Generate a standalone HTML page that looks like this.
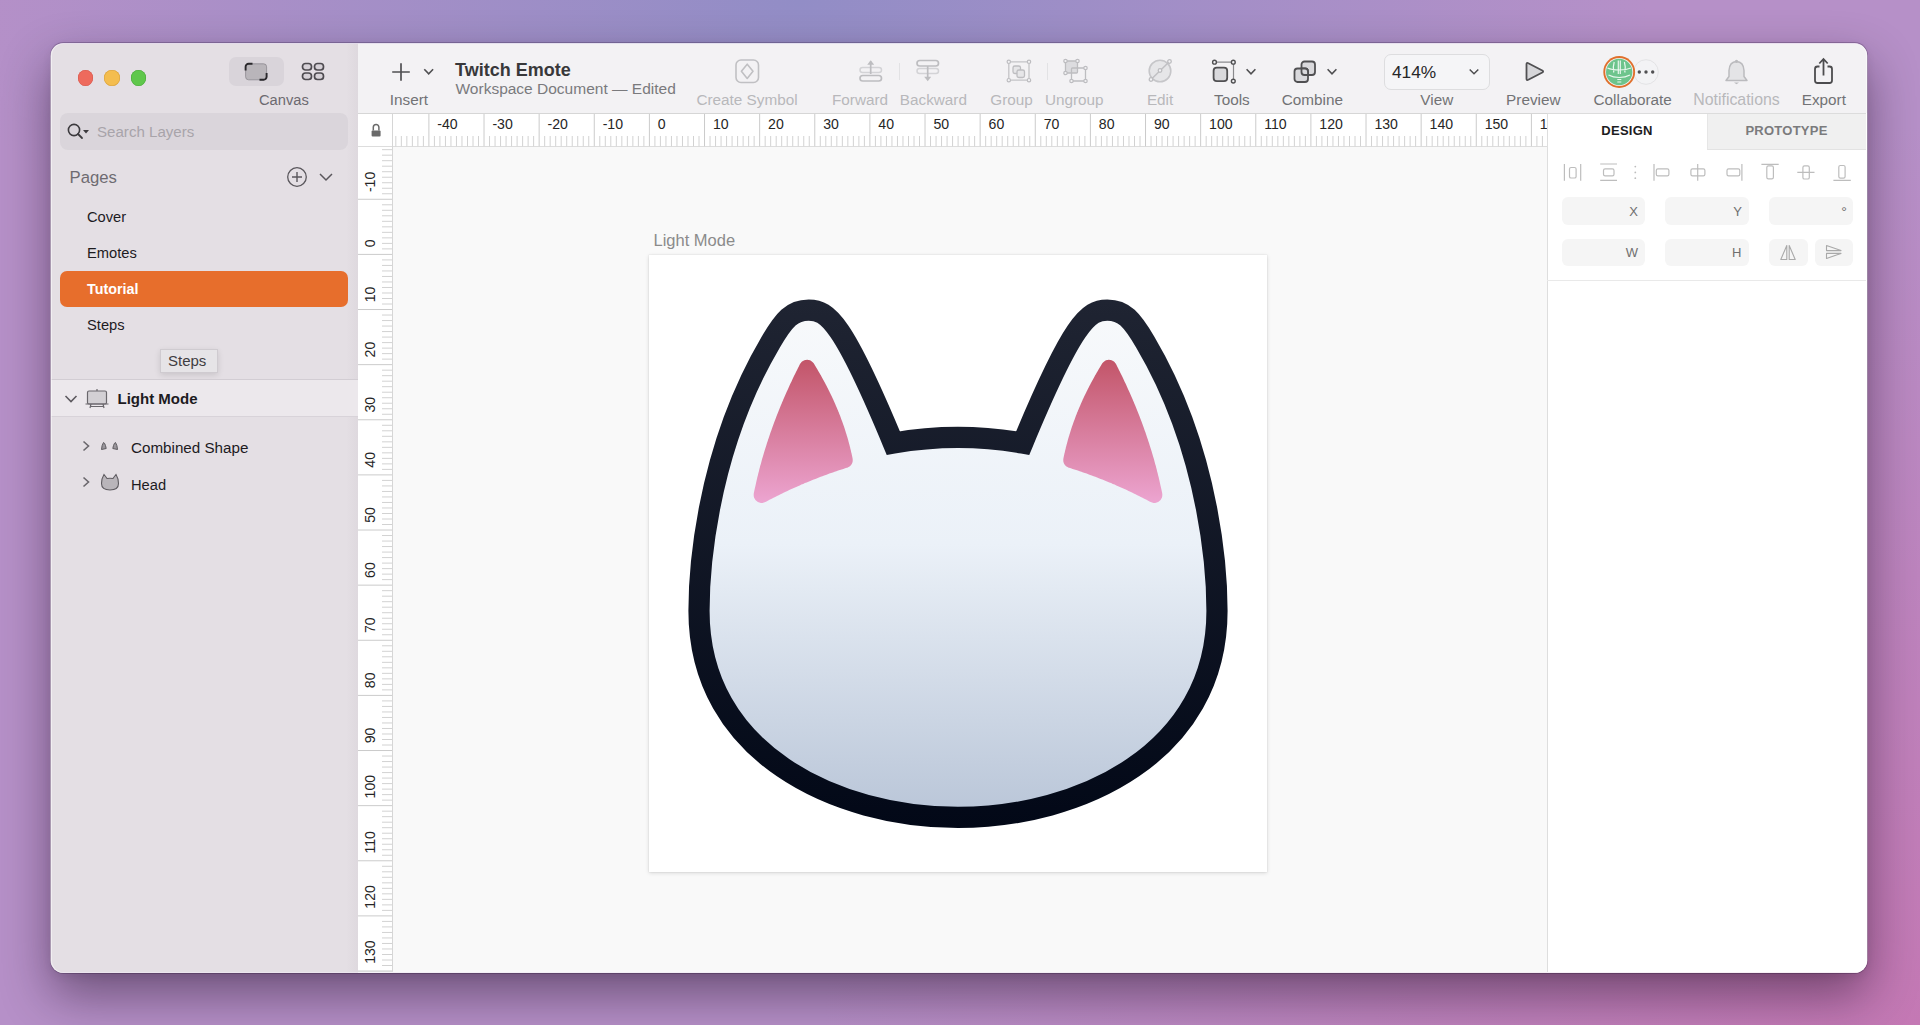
<!DOCTYPE html>
<html><head><meta charset="utf-8">
<style>
*{margin:0;padding:0;box-sizing:border-box}
html,body{width:1920px;height:1025px;overflow:hidden}
body{position:relative;font-family:"Liberation Sans",sans-serif;
background:radial-gradient(ellipse 850px 420px at 800px 0px,rgba(146,141,198,1),rgba(146,141,198,0)),radial-gradient(ellipse 1100px 900px at 1920px 1025px,rgba(196,120,180,1),rgba(196,120,180,0)),#b690c8;}
.a{position:absolute}
.t{position:absolute;white-space:nowrap;line-height:20px;height:20px}
#shadow{position:absolute;left:50.5px;top:43.4px;width:1816.8px;height:929.4px;border-radius:12.5px;
box-shadow:0 22px 50px rgba(20,5,25,.45),0 3px 10px rgba(20,5,25,.08),0 0 0 1px rgba(60,40,80,.3)}
#hl{position:absolute;left:50.5px;top:43.4px;width:1816.8px;height:929.4px;border-radius:12.5px;box-shadow:inset 0 0 0 1px rgba(255,255,255,.5);pointer-events:none}
#win{position:absolute;left:0;top:0;width:1920px;height:1025px;clip-path:inset(43.4px 52.7px 52.2px 50.5px round 12.5px)}
#side{position:absolute;left:50px;top:43px;width:308px;height:931px;background:#e4dfe4}
#tool{position:absolute;left:358px;top:43px;width:1510px;height:70px;background:#f3f2f4}
#hrul{position:absolute;left:358px;top:113px;width:1189px;height:34px;background:#fff;overflow:hidden}
#vrul{position:absolute;left:358px;top:147px;width:35px;height:827px;background:#fff;overflow:hidden}
#canvas{position:absolute;left:393px;top:147px;width:1154px;height:827px;background:#f9f9f9}
#insp{position:absolute;left:1547px;top:113px;width:321px;height:861px;background:#fff}
.dot{position:absolute;width:15.5px;height:15.5px;border-radius:50%;top:70.25px}
.tl{top:90px;width:120px;text-align:center;font-size:15.3px;color:#727275}
.dis{color:#b8b8bb}
.fld{position:absolute;height:27.5px;border-radius:6px;background:#f5f5f5}
.fld span{position:absolute;top:0.5px;line-height:27.5px;font-size:13px;font-weight:400;color:#6f6f6f}
.pg{font-size:14.7px;color:#1d1b1f}
</style></head><body>
<div id="shadow"></div>
<div id="win">
  <div id="side"></div>
  <div id="tool"></div>
  <div id="hrul"></div>
  <div id="vrul"></div>
  <div id="canvas"></div>
  <div id="insp"></div>

  <!-- SIDEBAR -->
  <div class="a" style="left:346px;top:43px;width:12px;height:931px;background:linear-gradient(90deg,rgba(60,40,60,0),rgba(60,40,60,.035))"></div>
  <div class="dot" style="left:77.5px;background:#ee6a5d;box-shadow:inset 0 0 0 .6px #d65a4f"></div>
  <div class="dot" style="left:104.2px;background:#f4bd4f;box-shadow:inset 0 0 0 .6px #d9a23f"></div>
  <div class="dot" style="left:130.8px;background:#5fc74b;box-shadow:inset 0 0 0 .6px #4ba83c"></div>

  <div class="a" style="left:228.5px;top:56.8px;width:55px;height:29px;border-radius:7px;background:#d9d4da"></div>
  <svg class="a" style="left:244px;top:62px" width="24" height="19" viewBox="0 0 24 19">
    <rect x="1.6" y="1.8" width="21" height="16" rx="3" fill="#b9b5ba" stroke="#8d898f" stroke-width=".8"/>
    <path d="M1.6 8.5 V4.8 a3 3 0 0 1 3 -3 H8.5" fill="none" stroke="#2a282c" stroke-width="1.9"/>
    <path d="M22.6 11 V14.8 a3 3 0 0 1 -3 3 H15.5" fill="none" stroke="#2a282c" stroke-width="1.9"/>
  </svg>
  <svg class="a" style="left:301px;top:62px" width="24" height="19" viewBox="0 0 24 19">
    <rect x="1.5" y="1.5" width="9" height="6.5" rx="3" fill="#d6d1d7" stroke="#4e4b50" stroke-width="1.7"/>
    <rect x="13.5" y="1.5" width="9" height="6.5" rx="3" fill="#d6d1d7" stroke="#4e4b50" stroke-width="1.7"/>
    <rect x="1.5" y="11" width="9" height="6.5" rx="3" fill="#d6d1d7" stroke="#4e4b50" stroke-width="1.7"/>
    <rect x="13.5" y="11" width="9" height="6.5" rx="3" fill="#d6d1d7" stroke="#4e4b50" stroke-width="1.7"/>
  </svg>
  <div class="t" style="left:259px;top:90px;font-size:14.7px;color:#6d6a70">Canvas</div>

  <div class="a" style="left:60px;top:113px;width:288px;height:37px;border-radius:8px;background:#dad5db"></div>
  <svg class="a" style="left:66px;top:122px" width="24" height="20" viewBox="0 0 24 20">
    <circle cx="8" cy="8" r="5.6" fill="none" stroke="#3c3a3e" stroke-width="1.6"/>
    <path d="M12 12 L16 16" stroke="#3c3a3e" stroke-width="1.8" stroke-linecap="round"/>
    <path d="M17 8 L23 8 L20 11.5 Z" fill="#3c3a3e"/>
  </svg>
  <div class="t" style="left:97px;top:122px;font-size:15.1px;color:#a8a4aa">Search Layers</div>

  <div class="t" style="left:69.5px;top:167.5px;font-size:16.7px;color:#6e6b71">Pages</div>
  <svg class="a" style="left:285px;top:165px" width="24" height="24" viewBox="0 0 24 24">
    <circle cx="12" cy="12" r="9.3" fill="none" stroke="#5a575c" stroke-width="1.3"/>
    <path d="M12 7 V17 M7 12 H17" stroke="#5a575c" stroke-width="1.4"/>
  </svg>
  <svg class="a" style="left:318px;top:170px" width="16" height="14" viewBox="0 0 16 14">
    <path d="M2 4 L8 10 L14 4" fill="none" stroke="#5a575c" stroke-width="1.5"/>
  </svg>

  <div class="t pg" style="left:87px;top:207px">Cover</div>
  <div class="t pg" style="left:87px;top:243px">Emotes</div>
  <div class="a" style="left:60px;top:270.5px;width:288px;height:36px;border-radius:7px;background:#e76e2c"></div>
  <div class="t pg" style="left:87px;top:279px;color:#fff;font-weight:700;font-size:14.3px">Tutorial</div>
  <div class="t pg" style="left:87px;top:315px">Steps</div>

  <div class="a" style="left:159.5px;top:348.5px;width:58px;height:24.5px;background:#e6e4e7;border:1px solid #cfcbd0;box-shadow:0 2px 6px rgba(0,0,0,.12)"></div>
  <div class="t" style="left:168px;top:351px;font-size:15px;color:#3f3d41">Steps</div>

  <div class="a" style="left:51px;top:379px;width:307px;height:1px;background:#d2cdd3"></div>
  <div class="a" style="left:51px;top:380px;width:307px;height:36px;background:#ece8ec"></div>
  <div class="a" style="left:51px;top:416px;width:307px;height:1px;background:#d8d3d9"></div>
  <svg class="a" style="left:64px;top:393px" width="14" height="12" viewBox="0 0 14 12">
    <path d="M1.5 3 L7 8.5 L12.5 3" fill="none" stroke="#5e5b60" stroke-width="1.6"/>
  </svg>
  <svg class="a" style="left:85px;top:388px" width="24" height="21" viewBox="0 0 24 21">
    <path d="M12 1 V3" stroke="#6a676c" stroke-width="1.2"/>
    <rect x="2.5" y="3" width="19" height="13" rx="1.5" fill="#d3d0d4" stroke="#6a676c" stroke-width="1.2"/>
    <path d="M0.5 16 H23.5 M6 16 L5 20 M18 16 L19 20 M5.5 18.5 H18.5" fill="none" stroke="#6a676c" stroke-width="1.2"/>
  </svg>
  <div class="t" style="left:117.5px;top:389px;font-size:15px;font-weight:700;color:#1d1b1f">Light Mode</div>

  <svg class="a" style="left:80px;top:440px" width="12" height="12" viewBox="0 0 12 12">
    <path d="M3.5 1.5 L8.5 6 L3.5 10.5" fill="none" stroke="#6a676c" stroke-width="1.6"/>
  </svg>
  <svg class="a" style="left:99px;top:441px" width="22" height="11" viewBox="0 0 22 11">
    <path d="M4.5 1.5 Q5.5 1.5 6.5 4.5 L7.2 7.5 Q5 8 2.5 8.5 Q2.8 4 4.5 1.5 Z" fill="#9a969c" stroke="#5e5b60" stroke-width="1"/>
    <path d="M16.5 1.5 Q15.5 1.5 14.5 4.5 L13.8 7.5 Q16 8 18.5 8.5 Q18.2 4 16.5 1.5 Z" fill="#9a969c" stroke="#5e5b60" stroke-width="1"/>
  </svg>
  <div class="t pg" style="left:131px;top:438px;font-size:15.2px">Combined Shape</div>

  <svg class="a" style="left:80px;top:476px" width="12" height="12" viewBox="0 0 12 12">
    <path d="M3.5 1.5 L8.5 6 L3.5 10.5" fill="none" stroke="#6a676c" stroke-width="1.6"/>
  </svg>
  <svg class="a" style="left:100px;top:472px" width="20" height="20" viewBox="0 0 20 20">
    <path d="M4 2.5 Q6 5 7 6.5 Q10 6 13 6.5 Q14 5 16 2.5 Q18.5 6.5 18.5 11.5 Q18.5 18 10 18 Q1.5 18 1.5 11.5 Q1.5 6.5 4 2.5 Z" fill="#b9b5ba" stroke="#5e5b60" stroke-width="1.1"/>
  </svg>
  <div class="t pg" style="left:131px;top:474.5px">Head</div>

  <!-- TOOLBAR -->
  <svg class="a" style="left:390px;top:61px" width="22" height="22" viewBox="0 0 22 22">
    <path d="M11 2.3V19.7M2.2 11H19.8" stroke="#505052" stroke-width="1.7" fill="none"/>
  </svg>
  <svg class="a" style="left:422px;top:66px" width="14" height="12" viewBox="0 0 14 12">
    <path d="M2.3 3.2L6.7 7.8L11.1 3.2" stroke="#505052" stroke-width="1.6" fill="none"/>
  </svg>
  <div class="t tl" style="left:349px">Insert</div>
  <div class="t" style="left:455px;top:59.5px;font-size:18px;font-weight:700;color:#38383a">Twitch Emote</div>
  <div class="t" style="left:455.5px;top:79px;font-size:15.5px;color:#7a7a7d">Workspace Document — Edited</div>

  <svg class="a" style="left:733px;top:57px" width="28" height="28" viewBox="0 0 28 28">
    <rect x="3" y="3" width="22.5" height="22.5" rx="5" fill="none" stroke="#c0c0c3" stroke-width="1.6"/>
    <path d="M14.2 7.2L20 14.2L14.2 21.4L8.4 14.2Z" fill="none" stroke="#c0c0c3" stroke-width="1.6" stroke-linejoin="round"/>
  </svg>
  <div class="t tl dis" style="left:687px">Create Symbol</div>

  <svg class="a" style="left:856px;top:57px" width="30" height="28" viewBox="0 0 30 28">
    <rect x="4" y="10.5" width="21.5" height="5" rx="2.5" fill="none" stroke="#d3d3d6" stroke-width="1.5"/>
    <rect x="4" y="18.5" width="21.5" height="5.5" rx="2.75" fill="none" stroke="#bdbdc0" stroke-width="1.7"/>
    <path d="M14.7 4.5V17" stroke="#bdbdc0" stroke-width="1.7"/>
    <path d="M11.2 7.8L14.7 3.2L18.2 7.8Z" fill="#bdbdc0"/>
  </svg>
  <div class="a" style="left:898.5px;top:63px;width:1px;height:17px;background:#e2e2e4"></div>
  <svg class="a" style="left:913px;top:57px" width="30" height="28" viewBox="0 0 30 28">
    <rect x="4" y="3.5" width="21.5" height="5.5" rx="2.75" fill="none" stroke="#bdbdc0" stroke-width="1.7"/>
    <rect x="4" y="11.5" width="21.5" height="5" rx="2.5" fill="none" stroke="#d3d3d6" stroke-width="1.5"/>
    <path d="M14.7 9V21" stroke="#bdbdc0" stroke-width="1.7"/>
    <path d="M11.2 19.8L14.7 24.3L18.2 19.8Z" fill="#bdbdc0"/>
  </svg>
  <div class="t tl dis" style="left:800px">Forward</div>
  <div class="t tl dis" style="left:873.4px">Backward</div>

  <svg class="a" style="left:1004px;top:57px" width="30" height="28" viewBox="0 0 30 28">
    <path d="M4.8 6.5V21.5M25 6.5V21.5M6.5 4.8H23.3M6.5 23.2H23.3" stroke="#c3c3c6" stroke-width="1.3"/>
    <circle cx="4.8" cy="4.8" r="1.7" fill="#f3f3f5" stroke="#bdbdc0" stroke-width="1.2"/>
    <circle cx="25" cy="4.8" r="1.7" fill="#f3f3f5" stroke="#bdbdc0" stroke-width="1.2"/>
    <circle cx="4.8" cy="23.2" r="1.7" fill="#f3f3f5" stroke="#bdbdc0" stroke-width="1.2"/>
    <circle cx="25" cy="23.2" r="1.7" fill="#f3f3f5" stroke="#bdbdc0" stroke-width="1.2"/>
    <rect x="9" y="9" width="7.5" height="7.5" rx="1.8" fill="#e6e6e8" stroke="#bdbdc0" stroke-width="1.3"/>
    <rect x="13" y="13" width="7.5" height="7.5" rx="1.8" fill="#e6e6e8" stroke="#bdbdc0" stroke-width="1.3"/>
  </svg>
  <div class="a" style="left:1047px;top:63px;width:1px;height:17px;background:#e2e2e4"></div>
  <svg class="a" style="left:1062px;top:57px" width="30" height="28" viewBox="0 0 30 28">
    <rect x="3.5" y="4" width="12" height="12" rx="1" fill="#dcdcdf" stroke="#bdbdc0" stroke-width="1.3"/>
    <rect x="9.5" y="11" width="14" height="13" rx="1" fill="none" stroke="#bdbdc0" stroke-width="1.3"/>
    <circle cx="3.5" cy="4" r="1.7" fill="#f3f3f5" stroke="#bdbdc0" stroke-width="1.2"/>
    <circle cx="15.5" cy="4" r="1.7" fill="#f3f3f5" stroke="#bdbdc0" stroke-width="1.2"/>
    <circle cx="3.5" cy="16" r="1.7" fill="#f3f3f5" stroke="#bdbdc0" stroke-width="1.2"/>
    <circle cx="23.5" cy="11" r="1.7" fill="#f3f3f5" stroke="#bdbdc0" stroke-width="1.2"/>
    <circle cx="9.5" cy="24" r="1.7" fill="#f3f3f5" stroke="#bdbdc0" stroke-width="1.2"/>
    <circle cx="23.5" cy="24" r="1.7" fill="#f3f3f5" stroke="#bdbdc0" stroke-width="1.2"/>
  </svg>
  <div class="t tl dis" style="left:951.6px">Group</div>
  <div class="t tl dis" style="left:1014.3px">Ungroup</div>

  <svg class="a" style="left:1146px;top:57px" width="28" height="28" viewBox="0 0 28 28">
    <circle cx="14" cy="14" r="10.8" fill="#e6e6e8" stroke="#c6c6c9" stroke-width="1.6"/>
    <path d="M5 22.5L23.5 4.5" stroke="#c0c0c3" stroke-width="1.5"/>
    <circle cx="14" cy="13.5" r="1.8" fill="#f3f3f5" stroke="#bdbdc0" stroke-width="1.3"/>
    <circle cx="5" cy="22.5" r="1.8" fill="#f3f3f5" stroke="#bdbdc0" stroke-width="1.3"/>
    <circle cx="23.5" cy="4.5" r="1.8" fill="#f3f3f5" stroke="#bdbdc0" stroke-width="1.3"/>
  </svg>
  <div class="t tl dis" style="left:1100.1px">Edit</div>

  <svg class="a" style="left:1209px;top:58px" width="30" height="28" viewBox="0 0 30 28">
    <path d="M6.5 4.2H24.5V21.2" fill="none" stroke="#8a8a8d" stroke-width="1.2"/>
    <rect x="4.6" y="9.6" width="13.6" height="13.6" rx="3.2" fill="#d9d9dc" stroke="#505052" stroke-width="1.8"/>
    <circle cx="5.5" cy="4.2" r="1.9" fill="#f3f3f5" stroke="#505052" stroke-width="1.4"/>
    <circle cx="24.3" cy="4.2" r="1.9" fill="#f3f3f5" stroke="#505052" stroke-width="1.4"/>
    <circle cx="24.3" cy="23.1" r="1.9" fill="#f3f3f5" stroke="#505052" stroke-width="1.4"/>
  </svg>
  <svg class="a" style="left:1244px;top:66px" width="14" height="12" viewBox="0 0 14 12">
    <path d="M2.6 3.2L7 7.8L11.4 3.2" stroke="#505052" stroke-width="1.6" fill="none"/>
  </svg>
  <div class="t tl" style="left:1171.9px">Tools</div>

  <svg class="a" style="left:1291px;top:58px" width="28" height="28" viewBox="0 0 28 28">
    <rect x="10.5" y="3.5" width="13.5" height="13.5" rx="3" fill="#d9d9dc" stroke="#505052" stroke-width="1.8"/>
    <rect x="3.5" y="10.5" width="13.5" height="13.5" rx="3" fill="#d9d9dc" stroke="#505052" stroke-width="1.8"/>
    <path d="M10.5 13.5V10.5H14A3 3 0 0 1 17 13.5V17H13.5A3 3 0 0 1 10.5 14Z" fill="#d9d9dc" stroke="#505052" stroke-width="1.8"/>
  </svg>
  <svg class="a" style="left:1325px;top:66px" width="14" height="12" viewBox="0 0 14 12">
    <path d="M2.6 3.2L7 7.8L11.4 3.2" stroke="#505052" stroke-width="1.6" fill="none"/>
  </svg>
  <div class="t tl" style="left:1252.3px">Combine</div>

  <div class="a" style="left:1383.5px;top:53.5px;width:106px;height:36px;border-radius:7px;border:1px solid #dddddf;background:#f5f5f7"></div>
  <div class="t" style="left:1392px;top:62px;font-size:17.3px;color:#262628">414%</div>
  <svg class="a" style="left:1467px;top:66px" width="14" height="12" viewBox="0 0 14 12">
    <path d="M2.7 3.5L7 7.8L11.3 3.5" stroke="#505052" stroke-width="1.5" fill="none"/>
  </svg>
  <div class="t tl" style="left:1376.8px">View</div>

  <svg class="a" style="left:1520px;top:58px" width="28" height="28" viewBox="0 0 28 28">
    <path d="M6.5 6.3Q6.5 4.3 8.3 5.2L22.3 12.5Q24 13.5 22.3 14.5L8.3 21.8Q6.5 22.7 6.5 20.7Z" fill="#d6d6d9" stroke="#505052" stroke-width="1.8" stroke-linejoin="round"/>
  </svg>
  <div class="t tl" style="left:1473.3px">Preview</div>

  <svg class="a" style="left:1601px;top:54px" width="64" height="36" viewBox="0 0 64 36">
    <circle cx="45" cy="18" r="12.3" fill="#f3f3f5" stroke="#e3e3e5" stroke-width="1"/>
    <circle cx="38.3" cy="18" r="1.7" fill="#505052"/>
    <circle cx="45" cy="18" r="1.7" fill="#505052"/>
    <circle cx="51.7" cy="18" r="1.7" fill="#505052"/>
    <circle cx="18.2" cy="18" r="15.9" fill="#e0702c"/>
    <circle cx="18.2" cy="18" r="14" fill="#f3f3f5"/>
    <circle cx="18.2" cy="18" r="13.2" fill="#6dc48c"/>
    <path d="M17.3 6.5V20M19.3 6.5V20M13.2 8Q11.6 13 12.8 18.5M23.4 8Q25 13 23.8 18.5M6.5 14Q11 16 18.3 16Q25.5 16 30 14M7.5 21Q12 23.5 18.3 23.5Q24.5 23.5 29 21M16.3 25.5H20.3M16.3 28H20.3" stroke="#e9f7ee" stroke-width="1.2" fill="none"/>
  </svg>
  <div class="t tl" style="left:1572.7px">Collaborate</div>

  <svg class="a" style="left:1724px;top:57px" width="26" height="30" viewBox="0 0 26 30">
    <path d="M12.5 4.6Q19.5 5 20 13.5V19.5L23 23.5H2L5 19.5V13.5Q5.5 5 12.5 4.6Z" fill="#e4e4e6" stroke="#bbbbbe" stroke-width="1.5" stroke-linejoin="round"/>
    <circle cx="12.5" cy="4.3" r="1.6" fill="#bbbbbe"/>
    <path d="M10 25.5H15L12.5 27.3Z" fill="#bbbbbe"/>
  </svg>
  <div class="t tl dis" style="left:1676.5px;font-size:15.9px">Notifications</div>

  <svg class="a" style="left:1810px;top:55px" width="28" height="32" viewBox="0 0 28 32">
    <path d="M9.5 11.5H7.5Q5 11.5 5 14V25.5Q5 28 7.5 28H19.5Q22 28 22 25.5V14Q22 11.5 19.5 11.5H17.5" fill="none" stroke="#4c4c4e" stroke-width="1.8"/>
    <path d="M13.5 20.5V4.5M9.3 8.5L13.5 4L17.7 8.5" fill="none" stroke="#4c4c4e" stroke-width="1.8"/>
  </svg>
  <div class="t tl" style="left:1763.8px">Export</div>

  <!-- INSPECTOR -->
  <div class="a" style="left:1547px;top:113px;width:1px;height:859px;background:#dedede"></div>
  <div class="a" style="left:1707px;top:113px;width:159px;height:36.5px;background:#f0f0f0;border-left:1px solid #e6e6e6;border-bottom:1px solid #e3e3e3"></div>
  <div class="a" style="left:1547px;top:113px;width:319px;height:1px;background:#dcdcdc"></div>
  <div class="t" style="left:1547px;top:121px;width:160px;text-align:center;font-size:13px;font-weight:700;letter-spacing:.25px;color:#1d1d1f">DESIGN</div>
  <div class="t" style="left:1707px;top:121px;width:159px;text-align:center;font-size:13px;font-weight:700;letter-spacing:.25px;color:#7b7b7d">PROTOTYPE</div>

  <svg class="a" style="left:1555px;top:158px" width="305" height="30" viewBox="1555 158 305 30" fill="none" stroke="#bdbdbd" stroke-width="1.2">
    <path d="M1564.4 164V180.7M1580.7 164V180.7"/>
    <rect x="1569.5" y="167.5" width="6.6" height="10.5" rx="1.6"/>
    <path d="M1600.2 164H1617M1600.2 180.4H1617"/>
    <rect x="1603.5" y="168.8" width="10.5" height="7" rx="1.6"/>
    <circle cx="1635.3" cy="166.6" r=".9" fill="#bdbdbd" stroke="none"/>
    <circle cx="1635.3" cy="172.4" r=".9" fill="#bdbdbd" stroke="none"/>
    <circle cx="1635.3" cy="178.2" r=".9" fill="#bdbdbd" stroke="none"/>
    <path d="M1654 164V180.7"/>
    <rect x="1656.3" y="168.8" width="12.6" height="7" rx="1.6"/>
    <path d="M1697.7 164V180.7"/>
    <rect x="1690.9" y="168.8" width="14" height="7" rx="1.6"/>
    <path d="M1741.9 164V180.7"/>
    <rect x="1727" y="168.8" width="12.8" height="7" rx="1.6"/>
    <path d="M1761.4 164.3H1778.7"/>
    <rect x="1766.8" y="165.8" width="6.6" height="13" rx="1.6"/>
    <path d="M1797.3 172.4H1814.5"/>
    <rect x="1802.9" y="165.8" width="6.4" height="13.2" rx="1.6"/>
    <path d="M1833.4 180.4H1850.8"/>
    <rect x="1838.8" y="165.5" width="6.3" height="12.6" rx="1.6"/>
  </svg>

  <div class="fld" style="left:1561.6px;top:197.2px;width:83.4px"><span style="right:7px">X</span></div>
  <div class="fld" style="left:1665.4px;top:197.2px;width:83.6px"><span style="right:7px">Y</span></div>
  <div class="fld" style="left:1769.3px;top:197.2px;width:83.6px"><span style="right:6px;top:1.5px;font-size:14px">°</span></div>
  <div class="fld" style="left:1561.6px;top:238.6px;width:83.4px"><span style="right:7px">W</span></div>
  <div class="fld" style="left:1665.4px;top:238.6px;width:83.6px"><span style="right:7.5px">H</span></div>
  <div class="fld" style="left:1769.3px;top:238.6px;width:38.4px"></div>
  <div class="fld" style="left:1815px;top:238.6px;width:37.9px"></div>
  <svg class="a" style="left:1776px;top:242px" width="24" height="20" viewBox="0 0 24 20" fill="none" stroke="#a9a9a9" stroke-width="1.1" stroke-linejoin="round">
    <path d="M10.8 3.5V17.5H4.8Z"/><path d="M13.2 3.5V17.5H19.2Z"/>
  </svg>
  <svg class="a" style="left:1822px;top:242px" width="24" height="20" viewBox="0 0 24 20" fill="none" stroke="#a9a9a9" stroke-width="1.1" stroke-linejoin="round">
    <path d="M4.5 3.5L19 8.6H4.5Z"/><path d="M4.5 11.4H19L4.5 16.5Z"/>
  </svg>
  <div class="a" style="left:1547px;top:280px;width:319px;height:1px;background:#e9e9e9"></div>

  <!-- CANVAS -->
  <div class="t" style="left:653.5px;top:230px;font-size:16.5px;color:#8b8b8b">Light Mode</div>
  <div class="a" style="left:649px;top:254.5px;width:617.5px;height:617.5px;background:#fff;box-shadow:0 0 0 .5px rgba(0,0,0,.05),0 1px 4px rgba(0,0,0,.14)"></div>
  <!--CAT-->
<svg class="a" style="left:649px;top:254px" width="618" height="618" viewBox="649 254 618 618">
<defs>
<linearGradient id="gs" x1="0" y1="299" x2="0" y2="829" gradientUnits="userSpaceOnUse"><stop offset="0" stop-color="#1f2432"/><stop offset="1" stop-color="#020817"/></linearGradient>
<linearGradient id="gf" x1="0" y1="320" x2="0" y2="807" gradientUnits="userSpaceOnUse"><stop offset="0" stop-color="#f7f9fb"/><stop offset=".46" stop-color="#ebf1f8"/><stop offset="1" stop-color="#bbc7d9"/></linearGradient>
<linearGradient id="gp" x1="0" y1="362" x2="0" y2="502" gradientUnits="userSpaceOnUse"><stop offset="0" stop-color="#c3566a"/><stop offset="1" stop-color="#eca4d0"/></linearGradient>
</defs>
<path d="M958.00 437.46C936.43 437.46 914.86 439.35 893.28 443.12C843.20 322.45 827.74 310.04 808.72 310.04C792.05 310.04 784.01 319.56 770.76 342.02C703.31 456.37 699.00 580.53 699.00 610.68C699.00 753.53 836.31 817.40 958.00 817.40C1079.69 817.40 1217.00 753.53 1217.00 610.68C1217.00 580.53 1212.69 456.37 1145.24 342.02C1131.99 319.56 1123.95 310.04 1107.28 310.04C1088.26 310.04 1072.80 322.45 1022.72 443.12C1001.14 439.35 979.57 437.46 958.00 437.46Z" fill="url(#gf)" stroke="url(#gs)" stroke-width="21.20" stroke-linejoin="miter" stroke-miterlimit="10"/>
<path d="M753.8 493.3L753.7 494.1L753.7 494.9L753.7 495.6L753.8 496.4L754.0 497.2L754.2 497.9L754.6 498.6L755.0 499.3L755.4 500.0L756.0 500.5L756.6 501.1L757.2 501.5L757.9 501.9L758.6 502.3L759.3 502.6L760.1 502.7L760.8 502.9L761.6 502.9L762.4 502.9L763.2 502.8L763.9 502.6L764.7 502.3L765.4 502.0L766.5 501.4L768.2 500.5L770.0 499.6L771.7 498.7L773.5 497.8L775.2 496.9L777.0 496.0L778.7 495.2L780.5 494.3L782.2 493.4L784.0 492.6L785.7 491.8L787.5 490.9L789.2 490.1L790.9 489.3L792.7 488.5L794.4 487.7L796.2 486.9L797.9 486.2L799.7 485.4L801.4 484.6L803.2 483.9L804.9 483.1L806.7 482.4L808.4 481.7L810.2 481.0L811.9 480.3L813.7 479.6L815.4 478.9L817.2 478.2L818.9 477.5L820.7 476.8L822.4 476.2L824.2 475.5L825.9 474.9L827.7 474.2L829.4 473.6L831.1 473.0L832.9 472.4L834.6 471.8L836.4 471.2L838.1 470.6L839.9 470.0L841.6 469.5L843.4 468.9L845.1 468.3L846.9 467.8L847.1 467.7L847.8 467.5L848.5 467.1L849.2 466.7L849.8 466.3L850.4 465.7L850.9 465.2L851.4 464.5L851.8 463.9L852.1 463.2L852.4 462.4L852.6 461.7L852.7 460.9L852.7 460.1L852.7 459.3L852.6 458.6L852.5 458.0L852.5 458.0L852.1 456.1L852.1 456.0L851.7 454.2L851.7 454.1L851.2 452.2L851.2 452.2L850.8 450.3L850.8 450.3L850.3 448.4L850.3 448.3L849.9 446.5L849.8 446.4L849.4 444.5L849.3 444.5L848.8 442.6L848.8 442.5L848.3 440.7L848.3 440.6L847.8 438.7L847.8 438.7L847.2 436.8L847.2 436.8L846.6 434.9L846.6 434.8L846.0 433.0L846.0 432.9L845.4 431.0L845.4 431.0L844.8 429.1L844.8 429.0L844.2 427.2L844.2 427.1L843.5 425.2L843.5 425.2L842.8 423.3L842.8 423.3L842.2 421.4L842.1 421.3L841.4 419.5L841.4 419.4L840.7 417.5L840.7 417.5L840.0 415.6L840.0 415.5L839.2 413.7L839.2 413.6L838.5 411.7L838.4 411.7L837.7 409.8L837.6 409.8L836.9 407.9L836.8 407.8L836.0 406.0L836.0 405.9L835.2 404.0L835.2 404.0L834.3 402.1L834.3 402.0L833.5 400.2L833.5 400.1L832.6 398.2L832.6 398.2L831.7 396.3L831.7 396.3L830.8 394.4L830.7 394.3L829.8 392.5L829.8 392.4L828.9 390.5L828.8 390.5L827.9 388.6L827.9 388.6L826.9 386.7L826.9 386.6L825.9 384.7L825.9 384.7L824.9 382.8L824.9 382.8L823.9 380.9L823.8 380.8L822.8 379.0L822.8 378.9L821.7 377.0L821.7 377.0L820.7 375.1L820.6 375.1L819.6 373.2L819.5 373.1L818.4 371.2L818.4 371.2L817.3 369.3L817.3 369.3L816.2 367.4L816.1 367.3L815.0 365.5L815.0 365.4L813.9 363.6L813.4 363.0L813.0 362.4L812.4 361.9L811.8 361.4L811.2 360.9L810.5 360.6L809.8 360.3L809.0 360.1L808.3 359.9L807.5 359.8L806.8 359.8L806.0 359.9L805.2 360.0L804.5 360.2L803.8 360.5L803.1 360.9L802.4 361.3L801.8 361.8L801.3 362.3L800.8 362.9L800.3 363.5L799.9 364.2L799.3 365.3L799.3 365.4L798.0 368.0L798.0 368.0L796.7 370.7L796.6 370.7L795.3 373.4L795.3 373.4L794.0 376.0L794.0 376.1L792.7 378.7L792.7 378.7L791.5 381.4L791.5 381.4L790.2 384.1L790.2 384.1L789.0 386.7L789.0 386.8L787.8 389.4L787.8 389.5L786.6 392.1L786.6 392.1L785.4 394.8L785.4 394.8L784.2 397.5L784.2 397.5L783.1 400.1L783.1 400.2L781.9 402.8L781.9 402.9L780.8 405.5L780.8 405.5L779.7 408.2L779.7 408.2L778.6 410.9L778.6 410.9L777.6 413.5L777.6 413.6L776.5 416.2L776.5 416.3L775.5 418.9L775.5 418.9L774.5 421.6L774.5 421.6L773.5 424.3L773.5 424.3L772.5 426.9L772.5 427.0L771.6 429.6L771.6 429.7L770.6 432.3L770.6 432.3L769.7 435.0L769.7 435.0L768.8 437.7L768.8 437.7L767.9 440.3L767.9 440.4L767.0 443.0L767.0 443.1L766.2 445.7L766.2 445.7L765.3 448.4L765.3 448.4L764.5 451.1L764.5 451.1L763.7 453.7L763.7 453.8L762.9 456.4L762.9 456.5L762.1 459.1L762.1 459.1L761.4 461.8L761.4 461.8L760.7 464.5L760.6 464.5L759.9 467.1L759.9 467.2L759.2 469.8L759.2 469.9L758.6 472.5L758.5 472.5L757.9 475.2L757.9 475.2L757.2 477.8L757.2 477.9L756.6 480.5L756.6 480.6L756.0 483.2L756.0 483.3L755.4 485.9L755.4 485.9L754.8 488.6L754.8 488.6L754.2 491.2L754.2 491.3L753.8 493.3ZM1162.2 493.3L1162.3 494.1L1162.3 494.9L1162.3 495.6L1162.2 496.4L1162.0 497.2L1161.8 497.9L1161.4 498.6L1161.0 499.3L1160.6 500.0L1160.0 500.5L1159.4 501.1L1158.8 501.5L1158.1 501.9L1157.4 502.3L1156.7 502.6L1155.9 502.7L1155.2 502.9L1154.4 502.9L1153.6 502.9L1152.8 502.8L1152.1 502.6L1151.3 502.3L1150.6 502.0L1149.5 501.4L1147.8 500.5L1146.0 499.6L1144.3 498.7L1142.5 497.8L1140.8 496.9L1139.0 496.0L1137.3 495.2L1135.5 494.3L1133.8 493.4L1132.0 492.6L1130.3 491.8L1128.5 490.9L1126.8 490.1L1125.1 489.3L1123.3 488.5L1121.6 487.7L1119.8 486.9L1118.1 486.2L1116.3 485.4L1114.6 484.6L1112.8 483.9L1111.1 483.1L1109.3 482.4L1107.6 481.7L1105.8 481.0L1104.1 480.3L1102.3 479.6L1100.6 478.9L1098.8 478.2L1097.1 477.5L1095.3 476.8L1093.6 476.2L1091.8 475.5L1090.1 474.9L1088.3 474.2L1086.6 473.6L1084.9 473.0L1083.1 472.4L1081.4 471.8L1079.6 471.2L1077.9 470.6L1076.1 470.0L1074.4 469.5L1072.6 468.9L1070.9 468.3L1069.1 467.8L1068.9 467.7L1068.2 467.5L1067.5 467.1L1066.8 466.7L1066.2 466.3L1065.6 465.7L1065.1 465.2L1064.6 464.5L1064.2 463.9L1063.9 463.2L1063.6 462.4L1063.4 461.7L1063.3 460.9L1063.3 460.1L1063.3 459.3L1063.4 458.6L1063.5 458.0L1063.5 458.0L1063.9 456.1L1063.9 456.0L1064.3 454.2L1064.3 454.1L1064.8 452.2L1064.8 452.2L1065.2 450.3L1065.2 450.3L1065.7 448.4L1065.7 448.3L1066.1 446.5L1066.2 446.4L1066.6 444.5L1066.7 444.5L1067.2 442.6L1067.2 442.5L1067.7 440.7L1067.7 440.6L1068.2 438.7L1068.2 438.7L1068.8 436.8L1068.8 436.8L1069.4 434.9L1069.4 434.8L1070.0 433.0L1070.0 432.9L1070.6 431.0L1070.6 431.0L1071.2 429.1L1071.2 429.0L1071.8 427.2L1071.8 427.1L1072.5 425.2L1072.5 425.2L1073.2 423.3L1073.2 423.3L1073.8 421.4L1073.9 421.3L1074.6 419.5L1074.6 419.4L1075.3 417.5L1075.3 417.5L1076.0 415.6L1076.0 415.5L1076.8 413.7L1076.8 413.6L1077.5 411.7L1077.6 411.7L1078.3 409.8L1078.4 409.8L1079.1 407.9L1079.2 407.8L1080.0 406.0L1080.0 405.9L1080.8 404.0L1080.8 404.0L1081.7 402.1L1081.7 402.0L1082.5 400.2L1082.5 400.1L1083.4 398.2L1083.4 398.2L1084.3 396.3L1084.3 396.3L1085.2 394.4L1085.3 394.3L1086.2 392.5L1086.2 392.4L1087.1 390.5L1087.2 390.5L1088.1 388.6L1088.1 388.6L1089.1 386.7L1089.1 386.6L1090.1 384.7L1090.1 384.7L1091.1 382.8L1091.1 382.8L1092.1 380.9L1092.2 380.8L1093.2 379.0L1093.2 378.9L1094.3 377.0L1094.3 377.0L1095.3 375.1L1095.4 375.1L1096.4 373.2L1096.5 373.1L1097.6 371.2L1097.6 371.2L1098.7 369.3L1098.7 369.3L1099.8 367.4L1099.9 367.3L1101.0 365.5L1101.0 365.4L1102.1 363.6L1102.6 363.0L1103.0 362.4L1103.6 361.9L1104.2 361.4L1104.8 360.9L1105.5 360.6L1106.2 360.3L1107.0 360.1L1107.7 359.9L1108.5 359.8L1109.2 359.8L1110.0 359.9L1110.8 360.0L1111.5 360.2L1112.2 360.5L1112.9 360.9L1113.6 361.3L1114.2 361.8L1114.7 362.3L1115.2 362.9L1115.7 363.5L1116.1 364.2L1116.7 365.3L1116.7 365.4L1118.0 368.0L1118.0 368.0L1119.3 370.7L1119.4 370.7L1120.7 373.4L1120.7 373.4L1122.0 376.0L1122.0 376.1L1123.3 378.7L1123.3 378.7L1124.5 381.4L1124.5 381.4L1125.8 384.1L1125.8 384.1L1127.0 386.7L1127.0 386.8L1128.2 389.4L1128.2 389.5L1129.4 392.1L1129.4 392.1L1130.6 394.8L1130.6 394.8L1131.8 397.5L1131.8 397.5L1132.9 400.1L1132.9 400.2L1134.1 402.8L1134.1 402.9L1135.2 405.5L1135.2 405.5L1136.3 408.2L1136.3 408.2L1137.4 410.9L1137.4 410.9L1138.4 413.5L1138.4 413.6L1139.5 416.2L1139.5 416.3L1140.5 418.9L1140.5 418.9L1141.5 421.6L1141.5 421.6L1142.5 424.3L1142.5 424.3L1143.5 426.9L1143.5 427.0L1144.4 429.6L1144.4 429.7L1145.4 432.3L1145.4 432.3L1146.3 435.0L1146.3 435.0L1147.2 437.7L1147.2 437.7L1148.1 440.3L1148.1 440.4L1149.0 443.0L1149.0 443.1L1149.8 445.7L1149.8 445.7L1150.7 448.4L1150.7 448.4L1151.5 451.1L1151.5 451.1L1152.3 453.7L1152.3 453.8L1153.1 456.4L1153.1 456.5L1153.9 459.1L1153.9 459.1L1154.6 461.8L1154.6 461.8L1155.3 464.5L1155.4 464.5L1156.1 467.1L1156.1 467.2L1156.8 469.8L1156.8 469.9L1157.4 472.5L1157.5 472.5L1158.1 475.2L1158.1 475.2L1158.8 477.8L1158.8 477.9L1159.4 480.5L1159.4 480.6L1160.0 483.2L1160.0 483.3L1160.6 485.9L1160.6 485.9L1161.2 488.6L1161.2 488.6L1161.8 491.2L1161.8 491.3L1162.2 493.3Z" fill="url(#gp)"/>
</svg>
<!--/CAT-->

<!--HR-->
<svg class="a" style="left:358px;top:113px" width="1188.5" height="34" viewBox="358 113 1188.5 34">
<rect x="358" y="113" width="1189" height="34" fill="#fff"/>
<path d="M395.82 136V146.5M401.34 136V146.5M406.85 136V146.5M412.36 136V146.5M417.88 136V146.5M423.39 136V146.5M434.41 136V146.5M439.92 136V146.5M445.44 136V146.5M450.95 136V146.5M456.46 136V146.5M461.97 136V146.5M467.49 136V146.5M473.00 136V146.5M478.51 136V146.5M489.54 136V146.5M495.05 136V146.5M500.56 136V146.5M506.07 136V146.5M511.59 136V146.5M517.10 136V146.5M522.61 136V146.5M528.12 136V146.5M533.64 136V146.5M544.66 136V146.5M550.17 136V146.5M555.69 136V146.5M561.20 136V146.5M566.71 136V146.5M572.23 136V146.5M577.74 136V146.5M583.25 136V146.5M588.76 136V146.5M599.79 136V146.5M605.30 136V146.5M610.81 136V146.5M616.32 136V146.5M621.84 136V146.5M627.35 136V146.5M632.86 136V146.5M638.38 136V146.5M643.89 136V146.5M654.91 136V146.5M660.42 136V146.5M665.94 136V146.5M671.45 136V146.5M676.96 136V146.5M682.48 136V146.5M687.99 136V146.5M693.50 136V146.5M699.01 136V146.5M710.04 136V146.5M715.55 136V146.5M721.06 136V146.5M726.57 136V146.5M732.09 136V146.5M737.60 136V146.5M743.11 136V146.5M748.62 136V146.5M754.14 136V146.5M765.16 136V146.5M770.67 136V146.5M776.19 136V146.5M781.70 136V146.5M787.21 136V146.5M792.73 136V146.5M798.24 136V146.5M803.75 136V146.5M809.26 136V146.5M820.29 136V146.5M825.80 136V146.5M831.31 136V146.5M836.83 136V146.5M842.34 136V146.5M847.85 136V146.5M853.36 136V146.5M858.88 136V146.5M864.39 136V146.5M875.41 136V146.5M880.92 136V146.5M886.44 136V146.5M891.95 136V146.5M897.46 136V146.5M902.98 136V146.5M908.49 136V146.5M914.00 136V146.5M919.51 136V146.5M930.54 136V146.5M936.05 136V146.5M941.56 136V146.5M947.08 136V146.5M952.59 136V146.5M958.10 136V146.5M963.61 136V146.5M969.12 136V146.5M974.64 136V146.5M985.66 136V146.5M991.17 136V146.5M996.69 136V146.5M1002.20 136V146.5M1007.71 136V146.5M1013.22 136V146.5M1018.74 136V146.5M1024.25 136V146.5M1029.76 136V146.5M1040.79 136V146.5M1046.30 136V146.5M1051.81 136V146.5M1057.33 136V146.5M1062.84 136V146.5M1068.35 136V146.5M1073.86 136V146.5M1079.38 136V146.5M1084.89 136V146.5M1095.91 136V146.5M1101.42 136V146.5M1106.94 136V146.5M1112.45 136V146.5M1117.96 136V146.5M1123.47 136V146.5M1128.99 136V146.5M1134.50 136V146.5M1140.01 136V146.5M1151.04 136V146.5M1156.55 136V146.5M1162.06 136V146.5M1167.58 136V146.5M1173.09 136V146.5M1178.60 136V146.5M1184.11 136V146.5M1189.62 136V146.5M1195.14 136V146.5M1206.16 136V146.5M1211.67 136V146.5M1217.19 136V146.5M1222.70 136V146.5M1228.21 136V146.5M1233.72 136V146.5M1239.24 136V146.5M1244.75 136V146.5M1250.26 136V146.5M1261.29 136V146.5M1266.80 136V146.5M1272.31 136V146.5M1277.83 136V146.5M1283.34 136V146.5M1288.85 136V146.5M1294.36 136V146.5M1299.88 136V146.5M1305.39 136V146.5M1316.41 136V146.5M1321.92 136V146.5M1327.44 136V146.5M1332.95 136V146.5M1338.46 136V146.5M1343.97 136V146.5M1349.49 136V146.5M1355.00 136V146.5M1360.51 136V146.5M1371.54 136V146.5M1377.05 136V146.5M1382.56 136V146.5M1388.08 136V146.5M1393.59 136V146.5M1399.10 136V146.5M1404.61 136V146.5M1410.12 136V146.5M1415.64 136V146.5M1426.66 136V146.5M1432.17 136V146.5M1437.69 136V146.5M1443.20 136V146.5M1448.71 136V146.5M1454.22 136V146.5M1459.74 136V146.5M1465.25 136V146.5M1470.76 136V146.5M1481.79 136V146.5M1487.30 136V146.5M1492.81 136V146.5M1498.33 136V146.5M1503.84 136V146.5M1509.35 136V146.5M1514.86 136V146.5M1520.38 136V146.5M1525.89 136V146.5M1536.91 136V146.5M1542.42 136V146.5" stroke="#d2d2d2" stroke-width="1" fill="none"/>
<path d="M428.90 113V146.5M484.02 113V146.5M539.15 113V146.5M594.27 113V146.5M649.40 113V146.5M704.52 113V146.5M759.65 113V146.5M814.77 113V146.5M869.90 113V146.5M925.02 113V146.5M980.15 113V146.5M1035.28 113V146.5M1090.40 113V146.5M1145.53 113V146.5M1200.65 113V146.5M1255.78 113V146.5M1310.90 113V146.5M1366.03 113V146.5M1421.15 113V146.5M1476.28 113V146.5M1531.40 113V146.5" stroke="#cbcbcb" stroke-width="1" fill="none"/>
<text x="437.30" y="129.2" font-size="14.1" fill="#252525">-40</text>
<text x="492.42" y="129.2" font-size="14.1" fill="#252525">-30</text>
<text x="547.55" y="129.2" font-size="14.1" fill="#252525">-20</text>
<text x="602.67" y="129.2" font-size="14.1" fill="#252525">-10</text>
<text x="657.80" y="129.2" font-size="14.1" fill="#252525">0</text>
<text x="712.92" y="129.2" font-size="14.1" fill="#252525">10</text>
<text x="768.05" y="129.2" font-size="14.1" fill="#252525">20</text>
<text x="823.17" y="129.2" font-size="14.1" fill="#252525">30</text>
<text x="878.30" y="129.2" font-size="14.1" fill="#252525">40</text>
<text x="933.42" y="129.2" font-size="14.1" fill="#252525">50</text>
<text x="988.55" y="129.2" font-size="14.1" fill="#252525">60</text>
<text x="1043.68" y="129.2" font-size="14.1" fill="#252525">70</text>
<text x="1098.80" y="129.2" font-size="14.1" fill="#252525">80</text>
<text x="1153.93" y="129.2" font-size="14.1" fill="#252525">90</text>
<text x="1209.05" y="129.2" font-size="14.1" fill="#252525">100</text>
<text x="1264.18" y="129.2" font-size="14.1" fill="#252525">110</text>
<text x="1319.30" y="129.2" font-size="14.1" fill="#252525">120</text>
<text x="1374.43" y="129.2" font-size="14.1" fill="#252525">130</text>
<text x="1429.55" y="129.2" font-size="14.1" fill="#252525">140</text>
<text x="1484.68" y="129.2" font-size="14.1" fill="#252525">150</text>
<text x="1539.80" y="129.2" font-size="14.1" fill="#252525">160</text>
<path d="M358 113.5H1547M358 146.7H1547M392.5 113V147" stroke="#d6d6d6" stroke-width="1" fill="none"/>
</svg>
<!--/HR-->
<!--VR-->
<svg class="a" style="left:358px;top:147px" width="35" height="825" viewBox="358 147 35 825">
<rect x="358" y="147" width="35" height="825" fill="#fff"/>
<path d="M382 149.66H392.3M382 155.18H392.3M382 160.69H392.3M382 166.20H392.3M382 171.71H392.3M382 177.23H392.3M382 182.74H392.3M382 188.25H392.3M382 193.76H392.3M382 204.79H392.3M382 210.30H392.3M382 215.81H392.3M382 221.32H392.3M382 226.84H392.3M382 232.35H392.3M382 237.86H392.3M382 243.38H392.3M382 248.89H392.3M382 259.91H392.3M382 265.43H392.3M382 270.94H392.3M382 276.45H392.3M382 281.96H392.3M382 287.48H392.3M382 292.99H392.3M382 298.50H392.3M382 304.01H392.3M382 315.04H392.3M382 320.55H392.3M382 326.06H392.3M382 331.57H392.3M382 337.09H392.3M382 342.60H392.3M382 348.11H392.3M382 353.62H392.3M382 359.14H392.3M382 370.16H392.3M382 375.68H392.3M382 381.19H392.3M382 386.70H392.3M382 392.21H392.3M382 397.73H392.3M382 403.24H392.3M382 408.75H392.3M382 414.26H392.3M382 425.29H392.3M382 430.80H392.3M382 436.31H392.3M382 441.83H392.3M382 447.34H392.3M382 452.85H392.3M382 458.36H392.3M382 463.88H392.3M382 469.39H392.3M382 480.41H392.3M382 485.93H392.3M382 491.44H392.3M382 496.95H392.3M382 502.46H392.3M382 507.98H392.3M382 513.49H392.3M382 519.00H392.3M382 524.51H392.3M382 535.54H392.3M382 541.05H392.3M382 546.56H392.3M382 552.08H392.3M382 557.59H392.3M382 563.10H392.3M382 568.61H392.3M382 574.12H392.3M382 579.64H392.3M382 590.66H392.3M382 596.18H392.3M382 601.69H392.3M382 607.20H392.3M382 612.71H392.3M382 618.23H392.3M382 623.74H392.3M382 629.25H392.3M382 634.76H392.3M382 645.79H392.3M382 651.30H392.3M382 656.81H392.3M382 662.33H392.3M382 667.84H392.3M382 673.35H392.3M382 678.86H392.3M382 684.38H392.3M382 689.89H392.3M382 700.91H392.3M382 706.43H392.3M382 711.94H392.3M382 717.45H392.3M382 722.96H392.3M382 728.48H392.3M382 733.99H392.3M382 739.50H392.3M382 745.01H392.3M382 756.04H392.3M382 761.55H392.3M382 767.06H392.3M382 772.58H392.3M382 778.09H392.3M382 783.60H392.3M382 789.11H392.3M382 794.62H392.3M382 800.14H392.3M382 811.16H392.3M382 816.67H392.3M382 822.19H392.3M382 827.70H392.3M382 833.21H392.3M382 838.73H392.3M382 844.24H392.3M382 849.75H392.3M382 855.26H392.3M382 866.29H392.3M382 871.80H392.3M382 877.31H392.3M382 882.83H392.3M382 888.34H392.3M382 893.85H392.3M382 899.36H392.3M382 904.88H392.3M382 910.39H392.3M382 921.41H392.3M382 926.92H392.3M382 932.44H392.3M382 937.95H392.3M382 943.46H392.3M382 948.98H392.3M382 954.49H392.3M382 960.00H392.3M382 965.51H392.3" stroke="#d2d2d2" stroke-width="1" fill="none"/>
<path d="M358 199.28H392.3M358 254.40H392.3M358 309.52H392.3M358 364.65H392.3M358 419.77H392.3M358 474.90H392.3M358 530.02H392.3M358 585.15H392.3M358 640.27H392.3M358 695.40H392.3M358 750.52H392.3M358 805.65H392.3M358 860.77H392.3M358 915.90H392.3M358 971.02H392.3" stroke="#cbcbcb" stroke-width="1" fill="none"/>
<text transform="translate(374.8 192.08) rotate(-90)" x="0" y="0" font-size="14.1" fill="#252525">-10</text>
<text transform="translate(374.8 247.20) rotate(-90)" x="0" y="0" font-size="14.1" fill="#252525">0</text>
<text transform="translate(374.8 302.32) rotate(-90)" x="0" y="0" font-size="14.1" fill="#252525">10</text>
<text transform="translate(374.8 357.45) rotate(-90)" x="0" y="0" font-size="14.1" fill="#252525">20</text>
<text transform="translate(374.8 412.57) rotate(-90)" x="0" y="0" font-size="14.1" fill="#252525">30</text>
<text transform="translate(374.8 467.70) rotate(-90)" x="0" y="0" font-size="14.1" fill="#252525">40</text>
<text transform="translate(374.8 522.82) rotate(-90)" x="0" y="0" font-size="14.1" fill="#252525">50</text>
<text transform="translate(374.8 577.95) rotate(-90)" x="0" y="0" font-size="14.1" fill="#252525">60</text>
<text transform="translate(374.8 633.07) rotate(-90)" x="0" y="0" font-size="14.1" fill="#252525">70</text>
<text transform="translate(374.8 688.20) rotate(-90)" x="0" y="0" font-size="14.1" fill="#252525">80</text>
<text transform="translate(374.8 743.32) rotate(-90)" x="0" y="0" font-size="14.1" fill="#252525">90</text>
<text transform="translate(374.8 798.45) rotate(-90)" x="0" y="0" font-size="14.1" fill="#252525">100</text>
<text transform="translate(374.8 853.57) rotate(-90)" x="0" y="0" font-size="14.1" fill="#252525">110</text>
<text transform="translate(374.8 908.70) rotate(-90)" x="0" y="0" font-size="14.1" fill="#252525">120</text>
<text transform="translate(374.8 963.82) rotate(-90)" x="0" y="0" font-size="14.1" fill="#252525">130</text>
<path d="M392.5 147V972" stroke="#d6d6d6" stroke-width="1" fill="none"/>
</svg>
<!--/VR-->
  <div class="a" style="left:358px;top:971px;width:35px;height:1px;background:#dcdcdc"></div>
  <svg class="a" style="left:364px;top:119px" width="24" height="22" viewBox="0 0 24 22">
    <rect x="7.6" y="11.4" width="9" height="6" rx="1" fill="#6a6a6a"/>
    <path d="M9.3 11.5V8.3A2.8 2.8 0 0 1 14.9 8.3V11.5" fill="none" stroke="#6a6a6a" stroke-width="1.5"/>
  </svg>
</div>
<div id="hl"></div>
</body></html>
